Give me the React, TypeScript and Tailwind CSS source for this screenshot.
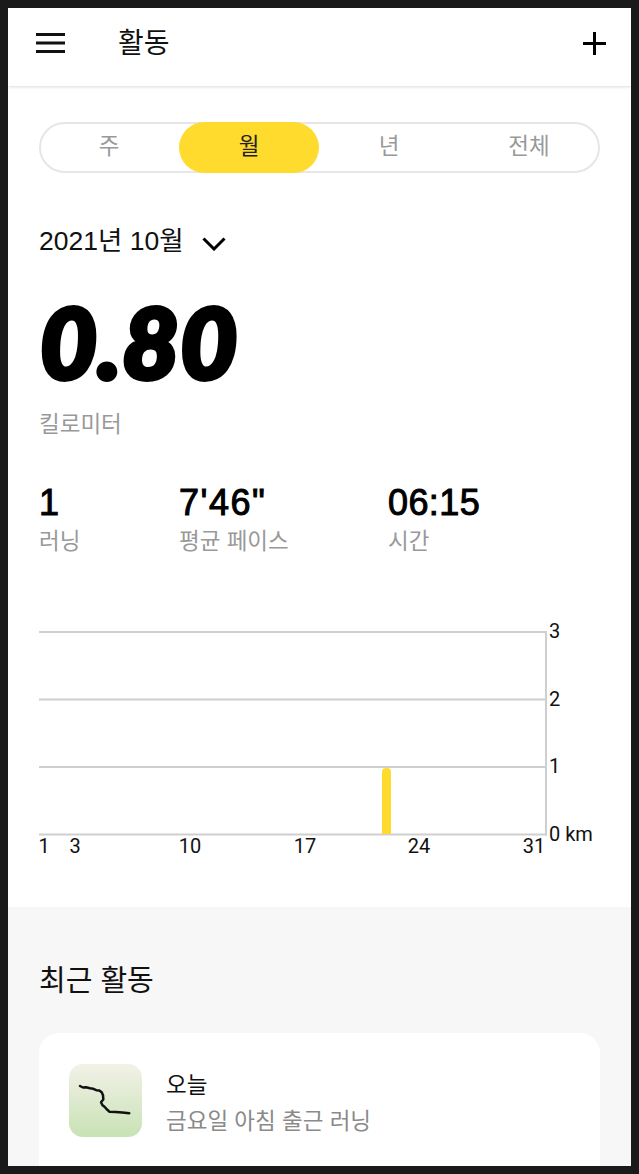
import React from "react";

const kr = "font-['Liberation_Sans','Noto_Sans_CJK_KR',sans-serif]";

const tabs = ["주", "월", "년", "전체"];
const stats = [
  { value: "1", label: "러닝", width: "w-[140px]", spacing: "tracking-normal" },
  { value: "7'46\"", label: "평균 페이스", width: "w-[209px]", spacing: "tracking-[1.500px]" },
  { value: "06:15", label: "시간", width: "w-[150px]", spacing: "tracking-[0.400px]" },
];
const xLabels = [
  { x: 44, t: "1" },
  { x: 75, t: "3" },
  { x: 190, t: "10" },
  { x: 305, t: "17" },
  { x: 419, t: "24" },
  { x: 534, t: "31" },
];
const yLabels = [
  { y: 1, t: "3" },
  { y: 68.5, t: "2" },
  { y: 136, t: "1" },
  { y: 203.5, t: "0 km" },
];

function Chart() {
  return (
    <svg width="623" height="250" viewBox="8 -20 623 250" className="block" fontFamily="Roboto, sans-serif" fontSize="20">
      {[1, 68.5, 136, 203.5].map((y) => (
        <line key={y} x1="39" x2="547" y1={y} y2={y} stroke="#cfcfcf" strokeWidth="2" />
      ))}
      <line x1="546" x2="546" y1="0" y2="204.5" stroke="#cfcfcf" strokeWidth="2" />
      <path d="M382 203V141q0-4 4.500-4t4.500 4v62z" fill="#ffdb2d" />
      {yLabels.map((l) => (
        <text key={l.t} x="549" y={l.y + 6} fill="#111">{l.t}</text>
      ))}
      {xLabels.map((l) => (
        <text key={l.t} x={l.x} y="222" textAnchor="middle" fill="#111">{l.t}</text>
      ))}
    </svg>
  );
}

export default function App() {
  return (
    <div className={`h-[1174px] overflow-hidden bg-[#1a1a1a] p-2 ${kr}`}>
      <div className="h-[1158px] overflow-hidden bg-white">
        <header className="relative flex h-[78px] items-center justify-between pb-2 pl-[28px] pr-[25px] shadow-[0_1px_3px_rgba(0,0,0,0.14)]">
          <div className="flex items-center">
            <svg width="29" height="20" viewBox="0 0 29 20" fill="none" stroke="#111" strokeWidth="3">
              <path d="M0 1.500h29M0 10h29M0 18.500h29" />
            </svg>
            <h1 className="ml-[53px] mt-[1px] text-[28px] leading-none text-[#111]">활동</h1>
          </div>
          <svg width="23" height="23" viewBox="0 0 23 23" fill="none" stroke="#000" strokeWidth="3">
            <path d="M11.500 0v23M0 11.500h23" />
          </svg>
        </header>

        <section className="h-[821px] px-[31px] pt-[36px]">
          <div className="h-[51px] w-[561px] rounded-full border-2 border-[#e6e6e6]">
            <div className="-mx-[2px] flex">
              {tabs.map((t) => (
                <div
                  key={t}
                  className={
                    t === "월"
                      ? "-my-[2px] flex h-[51px] w-[140px] items-center justify-center rounded-full bg-[#ffdb2d] pb-[2px] text-[22.500px] text-[#222]"
                      : "-my-[2px] flex h-[51px] w-[140px] items-center justify-center pb-[2px] text-[22.500px] text-[#999]"
                  }
                >
                  {t}
                </div>
              ))}
            </div>
          </div>

          <div className="mt-[50px] flex h-[36px] items-center">
            <span className="text-[26.500px] leading-none text-[#111]">2021년 10월</span>
            <svg className="ml-[18px] mt-[6px]" width="24" height="14" viewBox="0 0 24 14" fill="none" stroke="#000" strokeWidth="3">
              <path d="M1.500 1.500L12 12 22.500 1.500" />
            </svg>
          </div>

          <div className="ml-[1px] mt-[32px] h-[100px] font-['Lato',sans-serif] text-[98px] font-black italic leading-[100px] tracking-[1px] text-black [-webkit-text-stroke:5px_black]">
            0.80
          </div>
          <div className="mt-[19px] text-[22.500px] leading-[30px] text-[#999]">킬로미터</div>

          <div className="mt-[43px] flex">
            {stats.map((s) => (
              <div key={s.label} className={s.width}>
                <div className={`text-[36px] leading-[40px] text-black [-webkit-text-stroke:1px_black] ${s.spacing}`}>{s.value}</div>
                <div className="mt-[4px] text-[22.500px] leading-[30px] text-[#999]">{s.label}</div>
              </div>
            ))}
          </div>

          <div className="-mx-[31px] mt-[54px]">
            <Chart />
          </div>
        </section>

        <section className="h-[260px] bg-[#f7f7f7] px-[31px] pt-[56px]">
          <h2 className="text-[29px] leading-[36px] text-[#111]">최근 활동</h2>
          <div className="mt-[34px] flex h-[180px] w-[561px] rounded-[20px] bg-white pl-[30px] pt-[31px]">
            <div className="h-[73px] w-[73px] rounded-[14px] bg-gradient-to-b from-[#f3f1e7] to-[#c8e2b5]">
              <svg width="73" height="73" viewBox="0 0 73 73" fill="none" stroke="#111" strokeWidth="2.500" strokeLinecap="round" strokeLinejoin="round">
                <path d="M11 22l3 1.500 3-.3 4 1 3.300.6 3 1.400 3 .2 2.400 1.800 1.300 3 .3 4.300-2.300 2.700 1.500 3 2 1.500 2 2.300 2.800 2.700 6.500 .4 6.500 .4 7 .7" />
              </svg>
            </div>
            <div className="ml-[24px]">
              <div className="mt-[7px] text-[22.500px] leading-[30px] text-[#111]">오늘</div>
              <div className="mt-[6px] text-[22.500px] leading-[30px] text-[#8a8a8a]">금요일 아침 출근 러닝</div>
            </div>
          </div>
        </section>
      </div>
    </div>
  );
}
